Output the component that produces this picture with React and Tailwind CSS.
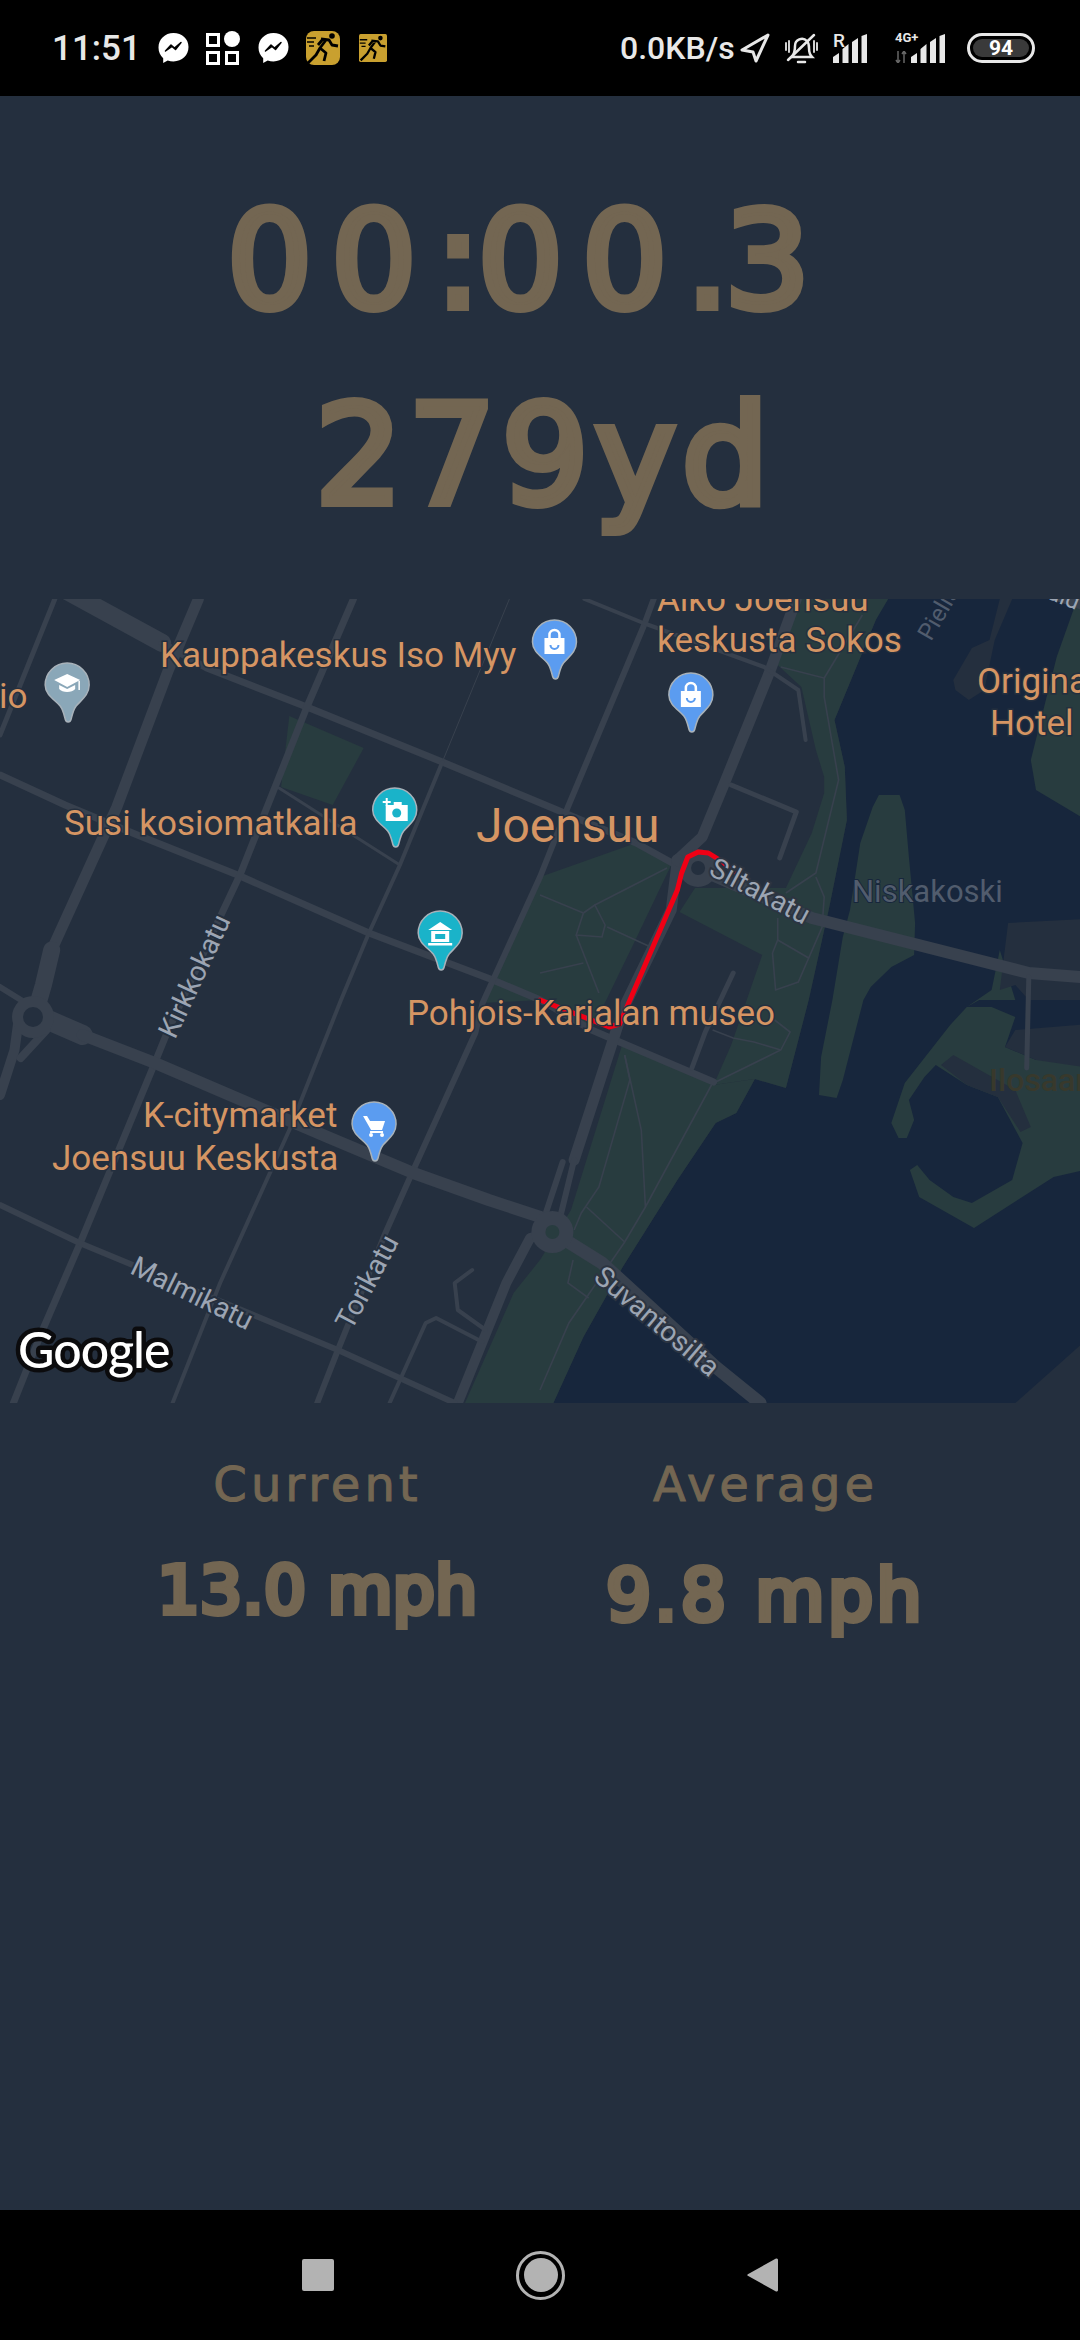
import React from 'react';

// crops of the map were read at 2.904x, coordinates below were taken at 3x
const m = (x) => (x <= 523 ? x * 1.0333 : x < 540 ? 540 : 540 + (x - 540) * 1.0333);
const P = (pts) => pts.map(([x, y]) => `${m(x).toFixed(1)},${y}`).join(' ');

const LAND = '#242f3e';
const ROAD = '#38414e';
const PARK = '#283c3f';
const WATER = '#17263c';

const greens = [
    [[540, 877], [633, 843], [668, 863], [660, 880], [630, 945], [590, 1030], [523, 1000], [467, 1003]],
    [[793, 599], [877, 599], [865, 620], [825, 720], [835, 767], [837, 820], [820, 907], [800, 1000], [778, 1088], [748, 1079], [708, 1085], [725, 1045], [755, 955], [675, 912], [690, 888], [778, 888], [803, 833], [815, 793], [815, 777], [807, 750], [793, 687], [770, 665]],
    [[620, 1043], [708, 1085], [748, 1079], [730, 1113], [710, 1123], [673, 1180], [620, 1267], [582, 1337], [553, 1403], [450, 1403], [497, 1293], [540, 1260], [570, 1210]],
    [[280, 716], [352, 748], [322, 805], [272, 787]],
];

const islands = [
    [[862, 807], [868, 795], [888, 795], [893, 810], [897, 857], [903, 923], [902, 955], [880, 967], [860, 987], [853, 1000], [833, 1080], [827, 1098], [810, 1095], [812, 1057], [823, 1000], [833, 937], [840, 910], [850, 843]],
    [[953, 1007], [937, 1025], [893, 1083], [880, 1123], [887, 1138], [895, 1138], [902, 1120], [897, 1100], [912, 1077], [923, 1065], [953, 1085], [983, 1097], [1007, 1143], [997, 1180], [958, 1203], [940, 1197], [917, 1180], [905, 1165], [898, 1170], [907, 1197], [960, 1228], [1037, 1177], [1080, 1167], [1090, 1030], [1020, 1060], [990, 1047], [1000, 1017], [977, 1007]],
    [[1060, 599], [1040, 657], [1015, 760], [1020, 790], [1085, 830], [1085, 599]],
    [[977, 990], [985, 950], [1000, 1000], [965, 1000], [953, 1007]],
];

const darkLand = [
    [[985, 599], [997, 599], [980, 640], [970, 690], [955, 700], [942, 690], [940, 680], [958, 648], [975, 640]],
    [[985, 990], [993, 923], [1085, 918], [1085, 1000], [1013, 1000], [1000, 985]],
    [[990, 1047], [1000, 1030], [1085, 1023], [1085, 1070], [1020, 1060]],
    [[928, 1065], [940, 1055], [1000, 1090], [1015, 1127], [1005, 1132], [983, 1097], [953, 1085]],
    [[1085, 1325], [1000, 1403], [1085, 1403]],
];

const roads = [
    { w: 18, pts: [[63, 590], [157, 643]] },
    { w: 7, pts: [[157, 643], [200, 668], [297, 707], [428, 762], [523, 803], [633, 843], [668, 863]] },
    { w: 7, pts: [[0, 775], [63, 805], [133, 835], [230, 875], [357, 933], [477, 980], [523, 1000], [590, 1030], [617, 1042], [708, 1082]] },
    { w: 3, pts: [[270, 788], [387, 865]] },
    { w: 5, pts: [[53, 599], [0, 735]] },
    { w: 11, pts: [[192, 599], [163, 670], [113, 807], [50, 950]] },
    { w: 17, pts: [[50, 950], [42, 985], [33, 1017]] },
    { w: 7, pts: [[342, 599], [297, 707], [233, 873], [213, 917], [160, 1037], [147, 1070], [78, 1242], [40, 1333], [13, 1403]] },
    { w: 1, pts: [[493, 599], [428, 762]] },
    { w: 4, pts: [[428, 762], [387, 865], [357, 933], [330, 1000], [280, 1130], [213, 1283], [167, 1403]] },
    { w: 6, pts: [[650, 599], [640, 627], [567, 807], [540, 877], [467, 1003], [460, 1033], [397, 1177], [373, 1233], [327, 1350], [307, 1403]] },
    { w: 11, pts: [[788, 599], [763, 670], [717, 787], [697, 837], [673, 860], [667, 910], [620, 1010], [613, 1033], [573, 1160]] },
    { w: 6, pts: [[573, 1160], [560, 1215]] },
    { w: 6, pts: [[562, 1162], [545, 1215]] },
    { w: 20, pts: [[40, 1017], [80, 1035]] },
    { w: 12, pts: [[80, 1035], [150, 1063], [317, 1137], [400, 1173], [473, 1200], [523, 1217], [552, 1232]] },
    { w: 10, pts: [[552, 1232], [513, 1238], [490, 1283], [443, 1403]] },
    { w: 13, pts: [[552, 1232], [600, 1263], [710, 1367], [753, 1403]] },
    { w: 12, pts: [[673, 860], [803, 918], [1013, 973], [1063, 977], [1085, 977]] },
    { w: 5, pts: [[1013, 977], [1011, 1068]] },
    { w: 4, pts: [[583, 599], [640, 623], [757, 667], [790, 690], [797, 740]] },
    { w: 5, pts: [[725, 785], [788, 812], [772, 858]] },
    { w: 5, pts: [[727, 973], [700, 1032], [687, 1068]] },
    { w: 6, pts: [[0, 1205], [77, 1243], [250, 1317], [327, 1350], [440, 1403]] },
    { w: 4, pts: [[377, 1403], [412, 1323], [422, 1318], [467, 1342]] },
    { w: 4, pts: [[457, 1270], [440, 1283], [443, 1310], [470, 1330]] },
    { w: 10, pts: [[18, 1020], [14, 1050], [0, 1095]] },
    { w: 8, pts: [[45, 1030], [20, 1058]] },
    { w: 6, pts: [[0, 987], [25, 1003]] },
    { w: 3, pts: [[633, 843], [600, 828]] },
    { w: 14, pts: [[1030, 590], [1085, 610]] },
];

const paths = [
    [[582, 913], [593, 905], [603, 925], [600, 937], [575, 935], [582, 913]],
    [[593, 905], [663, 868]],
    [[540, 895], [582, 913]],
    [[605, 927], [647, 947]],
    [[575, 935], [597, 993]],
    [[540, 973], [582, 963]],
    [[773, 667], [815, 678], [815, 697], [829, 780], [807, 873], [778, 893]],
    [[815, 678], [852, 615]],
    [[807, 877], [815, 897], [813, 927], [800, 958], [770, 940], [765, 953], [768, 990], [790, 982], [800, 958]],
    [[770, 940], [770, 918]],
    [[767, 1020], [782, 1032], [773, 1050], [710, 1082]],
    [[707, 1030], [727, 1038], [747, 1042], [773, 1050]],
    [[707, 1083], [642, 1207], [622, 1242], [568, 1323], [540, 1390]],
    [[622, 1055], [638, 1130], [642, 1207]],
    [[622, 1055], [627, 1080], [597, 1187], [580, 1213], [573, 1230]],
    [[585, 1207], [622, 1242]],
    [[572, 1260], [567, 1283], [587, 1298]],
];

const poiLabels = [
    { t: 'Kauppakeskus Iso Myy', x: 160, y: 667 },
    { t: 'io', x: -1, y: 708 },
    { t: 'Susi kosiomatkalla', x: 64, y: 835 },
    { t: 'Joensuu', x: 476, y: 842, s: 48 },
    { t: 'Pohjois-Karjalan museo', x: 407, y: 1025 },
    { t: 'K-citymarket', x: 143, y: 1127 },
    { t: 'Joensuu Keskusta', x: 52, y: 1170 },
    { t: 'Aiko Joensuu', x: 657, y: 611 },
    { t: 'keskusta Sokos', x: 657, y: 652 },
    { t: 'Original', x: 977, y: 693 },
    { t: 'Hotel', x: 990, y: 735 },
];

const streetLabels = [
    { t: 'Kirkkokatu', x: 190, y: 977, a: -65 },
    { t: 'Siltakatu', x: 752, y: 893, a: 28 },
    { t: 'Malmikatu', x: 185, y: 1295, a: 26 },
    { t: 'Torikatu', x: 357, y: 1283, a: -62 },
    { t: 'Suvantosilta', x: 652, y: 1323, a: 40 },
];

const Pin = ({ x, y, color, children }) => (
    <g transform={`translate(${m(x)} ${y})`}>
        <path d="M-22 0a22 22 0 0 1 44 0c0 10-8 15-13 21-3 4-4 9-5 13-1 4-5 4-6 0-1-4-2-9-5-13-5-6-15-11-15-21z" fill={color} stroke="#a8b2ba" strokeWidth="1.5" />
        {children}
    </g>
);

const BagIcon = () => (
    <g>
        <rect x="-10" y="-4" width="20" height="16" fill="#fff" />
        <path d="M-5-4v-3a5 5 0 0 1 10 0v3" fill="none" stroke="#fff" strokeWidth="2.5" />
        <path d="M-4 3a4 4 0 0 0 8 0" fill="none" stroke="#5b9cf0" strokeWidth="2" />
    </g>
);

const GoogleMap = () => (
    <svg viewBox="0 599 1080 804" className="block w-full h-[804px] font-['Roboto']">
        <rect x="0" y="599" width="1080" height="804" fill={LAND} />
        <polygon points={P([[877, 590], [865, 620], [825, 720], [835, 767], [837, 820], [820, 907], [800, 1000], [778, 1088], [748, 1079], [730, 1113], [710, 1123], [673, 1180], [620, 1267], [582, 1337], [553, 1403], [1100, 1403], [1100, 590]])} fill={WATER} />
        {greens.map((g, i) => <polygon key={i} points={P(g)} fill={PARK} />)}
        {islands.map((g, i) => <polygon key={i} points={P(g)} fill={PARK} />)}
        {darkLand.map((g, i) => <polygon key={i} points={P(g)} fill={LAND} />)}

        {paths.map((p, i) => <polyline key={i} points={P(p)} fill="none" stroke={ROAD} strokeWidth="1.6" />)}
        {roads.map((r, i) => <polyline key={i} points={P(r.pts)} fill="none" stroke={ROAD} strokeWidth={r.w} strokeLinejoin="round" strokeLinecap="round" />)}

        <circle cx="33" cy="1017" r="21" fill={ROAD} />
        <circle cx="33" cy="1017" r="10" fill={LAND} />
        <circle cx={m(552)} cy="1232" r="21" fill={ROAD} />
        <circle cx={m(552)} cy="1232" r="7" fill={PARK} />
        <circle cx={m(693)} cy="868" r="19" fill={ROAD} />
        <circle cx={m(693)} cy="868" r="7" fill={LAND} />

        <polyline points={P([[540, 1000], [607, 1027], [617, 1024], [625, 1005], [673, 890], [677, 873], [683, 857], [693, 852], [703, 853], [717, 862], [727, 872]])} fill="none" stroke="#f00015" strokeWidth="5" strokeLinejoin="round" strokeLinecap="round" />

        {streetLabels.map((l) => (
            <text key={l.t} x={m(l.x)} y={l.y} transform={`rotate(${l.a} ${m(l.x)} ${l.y})`} textAnchor="middle" dominantBaseline="middle" fontSize="28" fill="#9ca5b3" stroke={l.t === 'Siltakatu' || l.t === 'Suvantosilta' ? '#2c3441' : LAND} strokeWidth="4" paintOrder="stroke">{l.t}</text>
        ))}
        <text x="931" y="642" transform="rotate(-60 931 642)" fontSize="24" fill="#515c6d" stroke={WATER} strokeWidth="2" paintOrder="stroke">Pielisjoki</text>
        <text x="1046" y="598" transform="rotate(22 1046 598)" fontSize="24" fill="#9ca5b3">aid</text>
        <text x="852" y="902" fontSize="31" fill="#515c6d" stroke={WATER} strokeWidth="2" paintOrder="stroke">Niskakoski</text>
        <text x="989" y="1091" fontSize="32" fontWeight="500" fill="#38392c">Ilosaari</text>

        {poiLabels.map((l) => (
            <text key={l.t} x={l.x} y={l.y} fontSize={l.s || 35} fill="#d59563" stroke={LAND} strokeWidth="3" paintOrder="stroke">{l.t}</text>
        ))}

        <Pin x={65} y={685} color="#8aa7b8">
            <path d="M-13-5 0-11 13-5 0 2z" fill="#fff" />
            <path d="M-8 0v4c3 4 13 4 16 0V0L0 4z" fill="#fff" />
            <path d="M12-4v9" stroke="#fff" strokeWidth="1.5" />
        </Pin>
        <Pin x={382} y={810} color="#1ab3c9">
            <rect x="-9" y="-5" width="22" height="16" fill="#fff" />
            <rect x="-1" y="-8" width="8" height="4" fill="#fff" />
            <circle cx="2" cy="3" r="4.5" fill="#1ab3c9" />
            <path d="M-12-8h8M-8-12v8" stroke="#fff" strokeWidth="2" />
        </Pin>
        <Pin x={426} y={933} color="#1ab3c9">
            <path d="M-12-3 0-11 12-3z" fill="#fff" />
            <rect x="-9" y="-2" width="18" height="11" fill="#fff" />
            <rect x="-5" y="1" width="10" height="5" fill="#1ab3c9" />
            <rect x="-12" y="10" width="24" height="2.5" fill="#fff" />
        </Pin>
        <Pin x={554} y={642} color="#5b9cf0"><BagIcon /></Pin>
        <Pin x={686} y={695} color="#5b9cf0"><BagIcon /></Pin>
        <Pin x={362} y={1124} color="#5b9cf0">
            <path d="M-11-8h4l3 5h15l-3 9H-3z" fill="#fff" />
            <rect x="-4" y="7" width="13" height="2" fill="#fff" />
            <circle cx="-3" cy="11" r="2" fill="#fff" />
            <circle cx="8" cy="11" r="2" fill="#fff" />
        </Pin>

        <text x="18" y="1368" fontFamily="Lato" fontSize="50" fontWeight="500" letterSpacing="-1" fill="#fff" stroke="#0b0b0d" strokeWidth="9" strokeLinejoin="round" paintOrder="stroke">Google</text>
    </svg>
);

const Messenger = () => (
    <svg width="31" height="32" viewBox="0 0 31 32">
        <path d="M15.5 1C7 1 .5 7.2.5 15.500c0 4.400 1.800 8.100 4.700 10.700V31l4.500-2.500c1.800.6 3.700.9 5.800.9 8.500 0 15-6.200 15-14.400S24 1 15.500 1z" fill="#fff" />
        <path d="M7.500 19l5.500-6 3.500 3 6.500-5.500-5.500 7-3.500-3z" fill="#000" stroke="#000" strokeWidth="1.500" strokeLinejoin="round" />
    </svg>
);

const Runner = ({ size, radius }) => (
    <svg width={size} height={size} viewBox="0 0 34 34">
        <rect width="34" height="34" rx={radius} fill="#c9a02f" />
        <circle cx="26" cy="5" r="2.800" fill="#000" />
        <path d="M15 8l8 1 3 5 6 1M20 9l-6 8 6 5-2 8M14 17l-4 7-8 8M17 8l-5 6" fill="none" stroke="#000" strokeWidth="2.800" strokeLinejoin="round" />
        <path d="M1 7h9M1 11h7M3 15h5" stroke="#000" strokeWidth="1.600" />
    </svg>
);

const Bars = ({ width }) => (
    <svg width={width} height="29" viewBox="0 0 40 29">
        <path d="M0 29v-6l6-4v10zM9.500 29V15l6-5v19zM19 29V8l6-4v25zM34 29H28.500V2L34 0z" fill="#e8e8e8" />
    </svg>
);

const StatusBar = () => (
    <div className="h-[96px] bg-black flex justify-between items-center pl-[52px] pr-[45px] font-['Roboto'] text-[#e8e8e8]">
        <div className="flex items-center">
            <span className="text-[35px] font-medium leading-none w-[83px] mr-[23px] whitespace-nowrap">11:51</span>
            <Messenger />
            <svg width="34" height="34" viewBox="0 0 34 34" className="ml-[17px]">
                <g fill="none" stroke="#fff" strokeWidth="3">
                    <rect x="1.500" y="3.500" width="11" height="11" />
                    <rect x="1.500" y="21.500" width="11" height="11" />
                    <rect x="20.500" y="21.500" width="11" height="11" />
                </g>
                <circle cx="26" cy="8" r="8" fill="#fff" />
            </svg>
            <span className="ml-[18px] flex"><Messenger /></span>
            <span className="ml-[17px] flex"><Runner size={34} radius={8} /></span>
            <span className="ml-[19px] flex"><Runner size={28} radius={2} /></span>
        </div>
        <div className="flex items-center">
            <span className="text-[32px] font-medium leading-none w-[112px] whitespace-nowrap">0.0KB/s</span>
            <svg width="30" height="30" viewBox="0 0 30 30" className="ml-[8px]">
                <path d="M28 2 2 17l11 2 3 9z" fill="none" stroke="#e8e8e8" strokeWidth="3" strokeLinejoin="round" />
            </svg>
            <svg width="35" height="32" viewBox="0 0 35 32" className="ml-[14px]">
                <g fill="none" stroke="#e8e8e8" strokeWidth="2.500" strokeLinecap="round">
                    <path d="M8 25c2-3 3-5 3-11a7 7 0 0 1 12-5c2 2 2 4 2 7 0 4 1 7 3 9z" />
                    <path d="M4 28 30 3" />
                    <path d="M2 11v7M5 9v11M30 9v11M33 11v7" strokeWidth="1.800" />
                    <path d="M14 30h7" strokeWidth="2.500" />
                </g>
            </svg>
            <div className="relative ml-[14px] flex">
                <Bars width={40} />
                <span className="absolute left-0 top-[-3px] text-[19px] font-medium leading-none">R</span>
            </div>
            <div className="relative ml-[22px] flex w-[56px] justify-end">
                <Bars width={40} />
                <span className="absolute left-0 top-[-3px] text-[13px] font-bold leading-none">4G+</span>
                <svg width="12" height="12" viewBox="0 0 12 12" className="absolute left-0 bottom-0">
                    <path d="M3 0v12M1 9l2 3 2-3M9 12V0M7 3l2-3 2 3" fill="none" stroke="#666" strokeWidth="1.500" />
                </svg>
            </div>
            <div className="ml-[16px] w-[68px] h-[30px] rounded-full border-[3px] border-[#e8e8e8] p-[3px]">
                <div className="h-full rounded-full bg-[#3a3a3a] flex items-center justify-center text-white text-[21px] font-bold leading-none">94</div>
            </div>
        </div>
    </div>
);

const Stat = ({ label, value, className, valueClass }) => (
    <div className={`flex flex-col items-center font-['DejaVu_Sans'] ${className}`}>
        <div className="text-[48px] leading-[60px] tracking-[4px] whitespace-nowrap [-webkit-text-stroke:1px_#736652]">{label}</div>
        <div className={`whitespace-nowrap ${valueClass}`}>{value}</div>
    </div>
);

const App = () => {
    return (
        <div className="w-[1080px] h-[2340px] flex flex-col bg-[#242f3e] overflow-hidden text-[#736652]">
            <StatusBar />
            <div className="h-[503px] flex flex-col items-center font-['DejaVu_Sans']">
                <div className="text-[134px] leading-[150px] mt-[90px] mr-[24px] whitespace-nowrap tracking-[19px] [-webkit-text-stroke:8px_#736652]">
                    00<span className="tracking-[-3px]">:</span>00<span className="tracking-[-4px]">.</span>3
                </div>
                <div className="text-[137px] leading-[150px] mt-[45px] ml-[10px] whitespace-nowrap tracking-[6px] [-webkit-text-stroke:8px_#736652]">279yd</div>
            </div>
            <GoogleMap />
            <div className="grid grid-cols-2 px-[95px] pt-[51px]">
                <Stat label="Current" value="13.0 mph" valueClass="text-[66px] leading-[80px] mt-[37px] tracking-[0.5px] [-webkit-text-stroke:6px_#736652]" />
                <Stat label="Average" value="9.8 mph" className="ml-[6px]" valueClass="text-[71px] leading-[86px] mt-[39px] tracking-[3.5px] [-webkit-text-stroke:6px_#736652]" />
            </div>
            <div className="mt-auto h-[130px] bg-black flex items-center justify-center gap-[182px]">
                <div className="w-[32px] h-[32px] bg-[#b3b3b3] rounded-[2px]"></div>
                <div className="w-[49px] h-[49px] rounded-full border-[3px] border-[#b3b3b3] flex items-center justify-center">
                    <div className="w-[34px] h-[34px] rounded-full bg-[#b3b3b3]"></div>
                </div>
                <svg width="31" height="36" viewBox="0 0 31 36">
                    <path d="M29 1.500a1.500 1.500 0 0 1 2 1.500v30a1.500 1.500 0 0 1-2 1.500L.8 18.800a1 1 0 0 1 0-1.600z" fill="#b3b3b3" />
                </svg>
            </div>
        </div>
    );
};

export default App;
